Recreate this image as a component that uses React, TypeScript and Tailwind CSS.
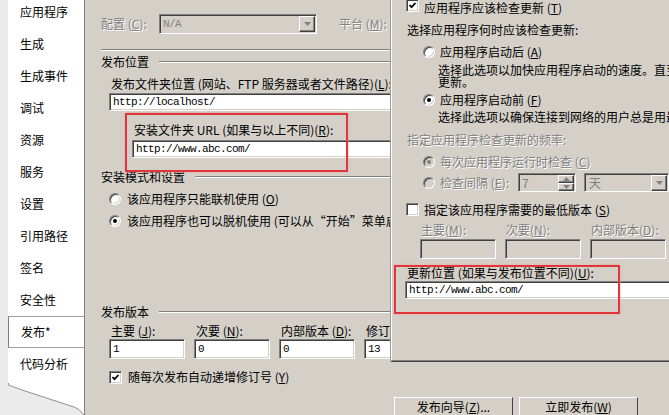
import React from "react";

const cjk = "font-['Noto_Sans_CJK_SC','Liberation_Sans',sans-serif]";
const mono = "font-['Liberation_Mono',monospace] text-[11px] tracking-[-0.6px]";
const sunken =
  "border border-t-[#808080] border-l-[#808080] border-b-white border-r-white shadow-[inset_1px_1px_0_#404040,inset_-1px_-1px_0_#d4d0c8]";
const raised =
  "border border-t-white border-l-white border-b-[#404040] border-r-[#404040] shadow-[inset_-1px_-1px_0_#808080]";
const grayText = "text-[#808080] [text-shadow:1px_1px_0_#ffffff]";

const tabs = ["应用程序", "生成", "生成事件", "调试", "资源", "服务", "设置", "引用路径", "签名", "安全性", "发布*", "代码分析"];

function Key({ k }: { k: string }) {
  return (
    <span>
      (<u>{k}</u>)
    </span>
  );
}

function TextBox({ value, className = "", disabled = false }: { value?: string; className?: string; disabled?: boolean }) {
  return (
    <div
      className={`${sunken} flex items-center pl-[3px] overflow-hidden whitespace-nowrap ${
        disabled ? "bg-[#d4d0c8] text-[#808080]" : "bg-white text-black"
      } ${className}`}
    >
      <span className={mono}>{value}</span>
    </div>
  );
}

function Radio({ checked = false, disabled = false }: { checked?: boolean; disabled?: boolean }) {
  return (
    <div
      className={`w-[12px] h-[12px] shrink-0 rounded-full border border-t-[#808080] border-l-[#808080] border-b-white border-r-white shadow-[inset_1px_1px_0_#404040,inset_-1px_-1px_0_#d4d0c8] flex items-center justify-center ${
        disabled ? "bg-[#d4d0c8]" : "bg-white"
      }`}
    >
      {checked && <div className={`w-[4px] h-[4px] rounded-full ${disabled ? "bg-[#808080]" : "bg-black"}`} />}
    </div>
  );
}

function Check({ checked = false }: { checked?: boolean }) {
  return (
    <div className={`${sunken} w-[13px] h-[13px] shrink-0 bg-white flex items-center justify-center`}>
      {checked && (
        <svg width="9" height="9" viewBox="0 0 9 9">
          <polyline points="1.5,4 3.5,6.2 7.5,2" fill="none" stroke="#000" strokeWidth="1.8" />
        </svg>
      )}
    </div>
  );
}

function Arrow({ up = false, color = "#000" }: { up?: boolean; color?: string }) {
  return (
    <svg width="7" height="4" viewBox="0 0 7 4">
      <polygon points={up ? "0,4 7,4 3.5,0" : "0,0 7,0 3.5,4"} fill={color} />
    </svg>
  );
}

function DropButton({ color = "#808080" }: { color?: string }) {
  return (
    <div className={`${raised} w-[16px] h-[16px] bg-[#d4d0c8] flex items-center justify-center shrink-0`}>
      <Arrow color={color} />
    </div>
  );
}

function GroupHeader({ title }: { title: string }) {
  return (
    <div className="flex items-center h-[14px] gap-[10px]">
      <span>{title}</span>
      <div className="flex-1 h-[2px] border-t border-t-[#808080] border-b border-b-white" />
    </div>
  );
}

function TabStrip() {
  return (
    <div className="relative w-[85px] shrink-0 flex h-full">
      <div className="w-[8px] bg-[#ebebeb]" />
      <div className="relative w-[77px] bg-white border-r border-r-[#808080] overflow-hidden">
        <div className="mt-[-4px]">
          {tabs.map((t, i) => (
            <div
              key={t}
              className={`h-[32px] flex items-center pl-[12px] ${
                i === 10 ? "border-y border-y-[#a0a0a0] border-l border-l-[#808080]" : ""
              }`}
            >
              {t}
            </div>
          ))}
        </div>
        <svg className="absolute left-0 bottom-0" width="77" height="32" viewBox="0 0 77 32">
          <path d="M0 0 L0 32 L77 32 L74 30 Q72 26 66 24 L14 7 Q6 4 0 2 Z" fill="#ebebeb" />
          <path d="M0.5 0 L0.5 2 Q6 4 14 7 L66 24 Q72 26 74 30 L76 32" fill="none" stroke="#909090" />
        </svg>
      </div>
    </div>
  );
}

function MainPanel() {
  return (
    <div className="flex-1 pl-[15px] border-l border-l-[#d4d0c8]">
      <div className="flex h-[20px] items-center mt-[14px]">
        <span className={`w-[58px] ${grayText}`}>
          配置 <Key k="C" />:
        </span>
        <div className={`${sunken} w-[158px] h-[20px] bg-[#d4d0c8] flex items-center justify-between pl-[3px] pr-[1px]`}>
          <span className={`${mono} text-[#808080]`}>N/A</span>
          <DropButton />
        </div>
        <span className={`ml-[22px] ${grayText}`}>
          平台 <Key k="M" />:
        </span>
      </div>

      <div className="mt-[15px] h-[2px] border-t border-t-[#808080] border-b border-b-white" />

      <div className="mt-[4px]">
        <GroupHeader title="发布位置" />
      </div>
      <div className="mt-[8px] h-[14px] flex items-center pl-[10px] whitespace-nowrap">
        发布文件夹位置 (网站、FTP 服务器或者文件路径) <Key k="L" />:
      </div>
      <TextBox value="http://localhost/" className="mt-[2px] ml-[8px] w-[320px] h-[18px]" />
      <div className="mt-[12px] h-[14px] flex items-center pl-[33px] whitespace-nowrap">
        安装文件夹 URL (如果与以上不同) <Key k="R" />:
      </div>
      <TextBox value="http://www.abc.com/" className="mt-[3px] ml-[31px] w-[300px] h-[18px]" />

      <div className="mt-[12px]">
        <GroupHeader title="安装模式和设置" />
      </div>
      <div className="mt-[8px] h-[14px] flex items-center gap-[6px] pl-[8px] whitespace-nowrap">
        <Radio />
        <span>
          该应用程序只能联机使用 <Key k="O" />
        </span>
      </div>
      <div className="mt-[8px] h-[14px] flex items-center gap-[6px] pl-[8px] whitespace-nowrap">
        <Radio checked />
        <span>该应用程序也可以脱机使用 (可以从“开始”菜单启动) (<u>A</u>)</span>
      </div>

      <div className="mt-[77px]">
        <GroupHeader title="发布版本" />
      </div>
      <div className="flex pl-[8px] mt-[5px]">
        {[
          ["主要", "J", "1"],
          ["次要", "N", "0"],
          ["内部版本", "D", "0"],
          ["修订", "", "13"],
        ].map(([l, k, v]) => (
          <div key={l} className="w-[85px] shrink-0 flex flex-col">
            <div className="h-[14px] flex items-center pl-[2px] whitespace-nowrap">
              {l}
              {k && (
                <>
                  &nbsp;<Key k={k} />:
                </>
              )}
            </div>
            <TextBox value={v} className="mt-[1px] w-[76px] h-[20px]" />
          </div>
        ))}
      </div>
      <div className="mt-[11px] h-[14px] flex items-center gap-[6px] pl-[8px] whitespace-nowrap">
        <Check checked />
        <span>
          随每次发布自动递增修订号 <Key k="Y" />
        </span>
      </div>

      <div className="mt-[13px] ml-[293px] flex gap-[6px]">
        <div className={`${raised} border-b-0 shadow-none w-[119px] h-[18px] bg-[#d4d0c8] flex items-center justify-center`}>
          发布向导 <Key k="Z" />...
        </div>
        <div className={`${raised} border-b-0 shadow-none w-[119px] h-[18px] bg-[#d4d0c8] flex items-center justify-center`}>
          立即发布 <Key k="W" />
        </div>
      </div>
    </div>
  );
}

function UpdatesDialog() {
  return (
    <div className="absolute left-[391px] top-0 w-[280px] h-[361px] bg-[#d4d0c8] border-l border-l-white border-b border-b-[#808080] shadow-[-1px_0_0_#9a9a9a,0_1px_0_#404040] pl-[14px] overflow-hidden whitespace-nowrap">
      <div className="mt-[1px] h-[14px] flex items-start gap-[5px]">
        <div className="mt-[-2px]">
          <Check checked />
        </div>
        <span>
          应用程序应该检查更新 <Key k="T" />
        </span>
      </div>
      <div className="mt-[8px] h-[14px] flex items-center pl-[1px]">选择应用程序何时应该检查更新:</div>
      <div className="mt-[8px] h-[14px] flex items-center gap-[5px] pl-[17px]">
        <Radio />
        <span>
          应用程序启动后 <Key k="A" />
        </span>
      </div>
      <div className="mt-[5px] pl-[32px] leading-[12px]">
        选择此选项以加快应用程序启动的速度。直至下次运行应用程序时才会安装
        <br />
        更新。
      </div>
      <div className="mt-[5px] h-[14px] flex items-center gap-[5px] pl-[17px]">
        <Radio checked />
        <span>
          应用程序启动前 <Key k="F" />
        </span>
      </div>
      <div className="mt-[4px] pl-[32px] leading-[12px]">选择此选项以确保连接到网络的用户总是用最新的更新运行应用程序。</div>

      <div className={`mt-[10px] h-[14px] flex items-center pl-[1px] ${grayText}`}>指定应用程序检查更新的频率:</div>
      <div className="mt-[8px] h-[14px] flex items-center gap-[5px] pl-[17px]">
        <Radio checked disabled />
        <span className={grayText}>
          每次应用程序运行时检查 <Key k="C" />
        </span>
      </div>
      <div className="mt-[4px] h-[19px] flex items-center pl-[17px]">
        <Radio disabled />
        <span className={`ml-[5px] w-[78px] ${grayText}`}>
          检查间隔 <Key k="E" />:
        </span>
        <div className={`${sunken} w-[58px] h-[19px] bg-[#d4d0c8] flex items-center justify-between pl-[3px] pr-[1px]`}>
          <span className="text-[#808080]">7</span>
          <div className="flex flex-col">
            <div className={`${raised} w-[16px] h-[8px] flex items-center justify-center`}>
              <Arrow up color="#808080" />
            </div>
            <div className={`${raised} w-[16px] h-[8px] flex items-center justify-center`}>
              <Arrow color="#808080" />
            </div>
          </div>
        </div>
        <div className={`${sunken} ml-[8px] w-[85px] h-[19px] bg-[#d4d0c8] flex items-center justify-between pl-[4px] pr-[1px] shrink-0`}>
          <span className="text-[#808080]">天</span>
          <DropButton />
        </div>
      </div>

      <div className="mt-[11px] h-[13px] flex items-center gap-[5px]">
        <Check />
        <span>
          指定该应用程序需要的最低版本 <Key k="S" />
        </span>
      </div>
      <div className="flex pl-[14px] mt-[7px]">
        {[
          ["主要", "M"],
          ["次要", "N"],
          ["内部版本", "D"],
        ].map(([l, k]) => (
          <div key={l} className="w-[85px] shrink-0 flex flex-col">
            <div className={`h-[14px] flex items-center pl-[1px] ${grayText}`}>
              {l} <Key k={k} />:
            </div>
            <TextBox disabled className="mt-[2px] w-[76px] h-[20px]" />
          </div>
        ))}
      </div>
      <div className="mt-[7px] h-[14px] flex items-center pl-[1px]">
        更新位置 (如果与发布位置不同) <Key k="U" />:
      </div>
      <TextBox value="http://www.abc.com/" className="mt-[1px] ml-[-1px] w-[280px] h-[18px]" />
    </div>
  );
}

export default function App() {
  return (
    <div className={`relative w-[669px] h-[415px] overflow-hidden bg-[#d4d0c8] text-[12px] leading-[14px] text-black ${cjk} flex`}>
      <TabStrip />
      <MainPanel />
      <UpdatesDialog />
      <div className="absolute left-[125px] top-[113px] w-[223px] h-[59px] border-2 border-[#e0353b] shadow-[0_0_2px_#f0a0a0]" />
      <div className="absolute left-[394px] top-[265px] w-[226px] h-[49px] border-2 border-[#e0353b] shadow-[0_0_2px_#f0a0a0]" />
    </div>
  );
}
